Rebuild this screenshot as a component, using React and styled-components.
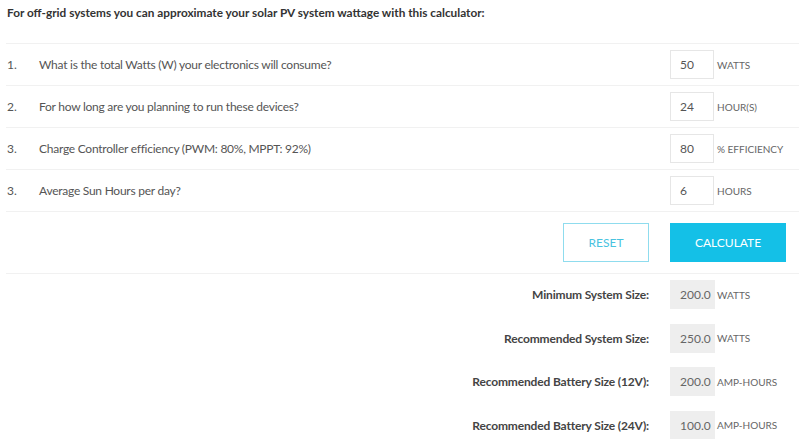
import React, { useState } from 'react'
import styled, { createGlobalStyle } from 'styled-components'

const GlobalStyle = createGlobalStyle`
  body {
    margin: 0;
    background: #fff;
    font-family: Lato, "Liberation Sans", sans-serif;
    color: #444;
  }
`

const Wrapper = styled.div`
  width: 799px;
  padding-left: 6px;
  box-sizing: border-box;
`

const Title = styled.div`
  height: 43px;
  padding: 5px 0 0 1px;
  box-sizing: border-box;
  font-size: 11.8px;
  font-weight: bold;
  color: #333;
`

const Row = styled.div`
  display: grid;
  grid-template-columns: 33px 1fr 47px 82px;
  align-items: center;
  height: 42px;
  border-top: 1px solid #f1f1f1;
  box-sizing: border-box;
  font-size: 12px;
`

const Num = styled.span`
  padding-left: 1px;
  color: #555;
`

const Question = styled.span`
  color: #555;
  letter-spacing: -0.25px;
`

const Field = styled.input`
  width: 44px;
  height: 29px;
  box-sizing: border-box;
  border: 1px solid #e6e6e6;
  padding: 0 0 0 9px;
  font: inherit;
  font-size: 12px;
  color: #555;
  outline: none;
`

const Unit = styled.span`
  font-size: 10px;
  color: #666;
  text-transform: uppercase;
`

const ButtonRow = styled.div`
  display: flex;
  justify-content: flex-end;
  align-items: center;
  gap: 21px;
  height: 62px;
  padding-right: 13px;
  border-top: 1px solid #f1f1f1;
  box-sizing: border-box;
`

const Button = styled.button`
  height: 39px;
  width: ${({wide}) => wide ? '116px' : '86px'};
  font: inherit;
  font-size: 12px;
  cursor: pointer;
  background: ${({primary}) => primary ? '#14c0e7' : '#fff'};
  color: ${({primary}) => primary ? '#fff' : '#49c3df'};
  border: 1px solid ${({primary}) => primary ? '#14c0e7' : '#8fdcee'};
`

const Results = styled.div`
  border-top: 1px solid #f1f1f1;
`

const ResultRow = styled.div`
  display: grid;
  grid-template-columns: 1fr 47px 82px;
  align-items: center;
  height: 43.6px;
  padding: 6px 0 8.6px;
  box-sizing: border-box;
`

const ResultLabel = styled.span`
  text-align: right;
  padding-right: 21px;
  font-size: 12px;
  font-weight: bold;
  letter-spacing: -0.15px;
  color: #444;
`

const ResultBox = styled.div`
  width: 45px;
  height: 29px;
  box-sizing: border-box;
  background: #eeeeee;
  display: flex;
  align-items: center;
  padding-left: 10px;
  font-size: 12px;
  color: #666;
`

const questions = [
  { num: '1.', text: 'What is the total Watts (W) your electronics will consume?', value: '50', unit: 'Watts' },
  { num: '2.', text: 'For how long are you planning to run these devices?', value: '24', unit: 'Hour(s)' },
  { num: '3.', text: 'Charge Controller efficiency (PWM: 80%, MPPT: 92%)', value: '80', unit: '% Efficiency' },
  { num: '3.', text: 'Average Sun Hours per day?', value: '6', unit: 'Hours' },
]

const results = [
  { label: 'Minimum System Size:', value: '200.0', unit: 'Watts' },
  { label: 'Recommended System Size:', value: '250.0', unit: 'Watts' },
  { label: 'Recommended Battery Size (12V):', value: '200.0', unit: 'Amp-Hours' },
  { label: 'Recommended Battery Size (24V):', value: '100.0', unit: 'Amp-Hours' },
]

export default function App() {
  const [values, setValues] = useState(questions.map(q => q.value))

  return (
    <Wrapper>
      <GlobalStyle />
      <Title>For off-grid systems you can approximate your solar PV system wattage with this calculator:</Title>

      {questions.map((q, i) => (
        <Row key={i}>
          <Num>{q.num}</Num>
          <Question>{q.text}</Question>
          <Field
            value={values[i]}
            onChange={e => setValues(values.map((v, j) => j === i ? e.target.value : v))}
          />
          <Unit>{q.unit}</Unit>
        </Row>
      ))}

      <ButtonRow>
        <Button onClick={() => setValues(questions.map(q => q.value))}>RESET</Button>
        <Button primary wide>CALCULATE</Button>
      </ButtonRow>

      <Results>
        {results.map((r, i) => (
          <ResultRow key={i}>
            <ResultLabel>{r.label}</ResultLabel>
            <ResultBox>{r.value}</ResultBox>
            <Unit>{r.unit}</Unit>
          </ResultRow>
        ))}
      </Results>
    </Wrapper>
  )
}
